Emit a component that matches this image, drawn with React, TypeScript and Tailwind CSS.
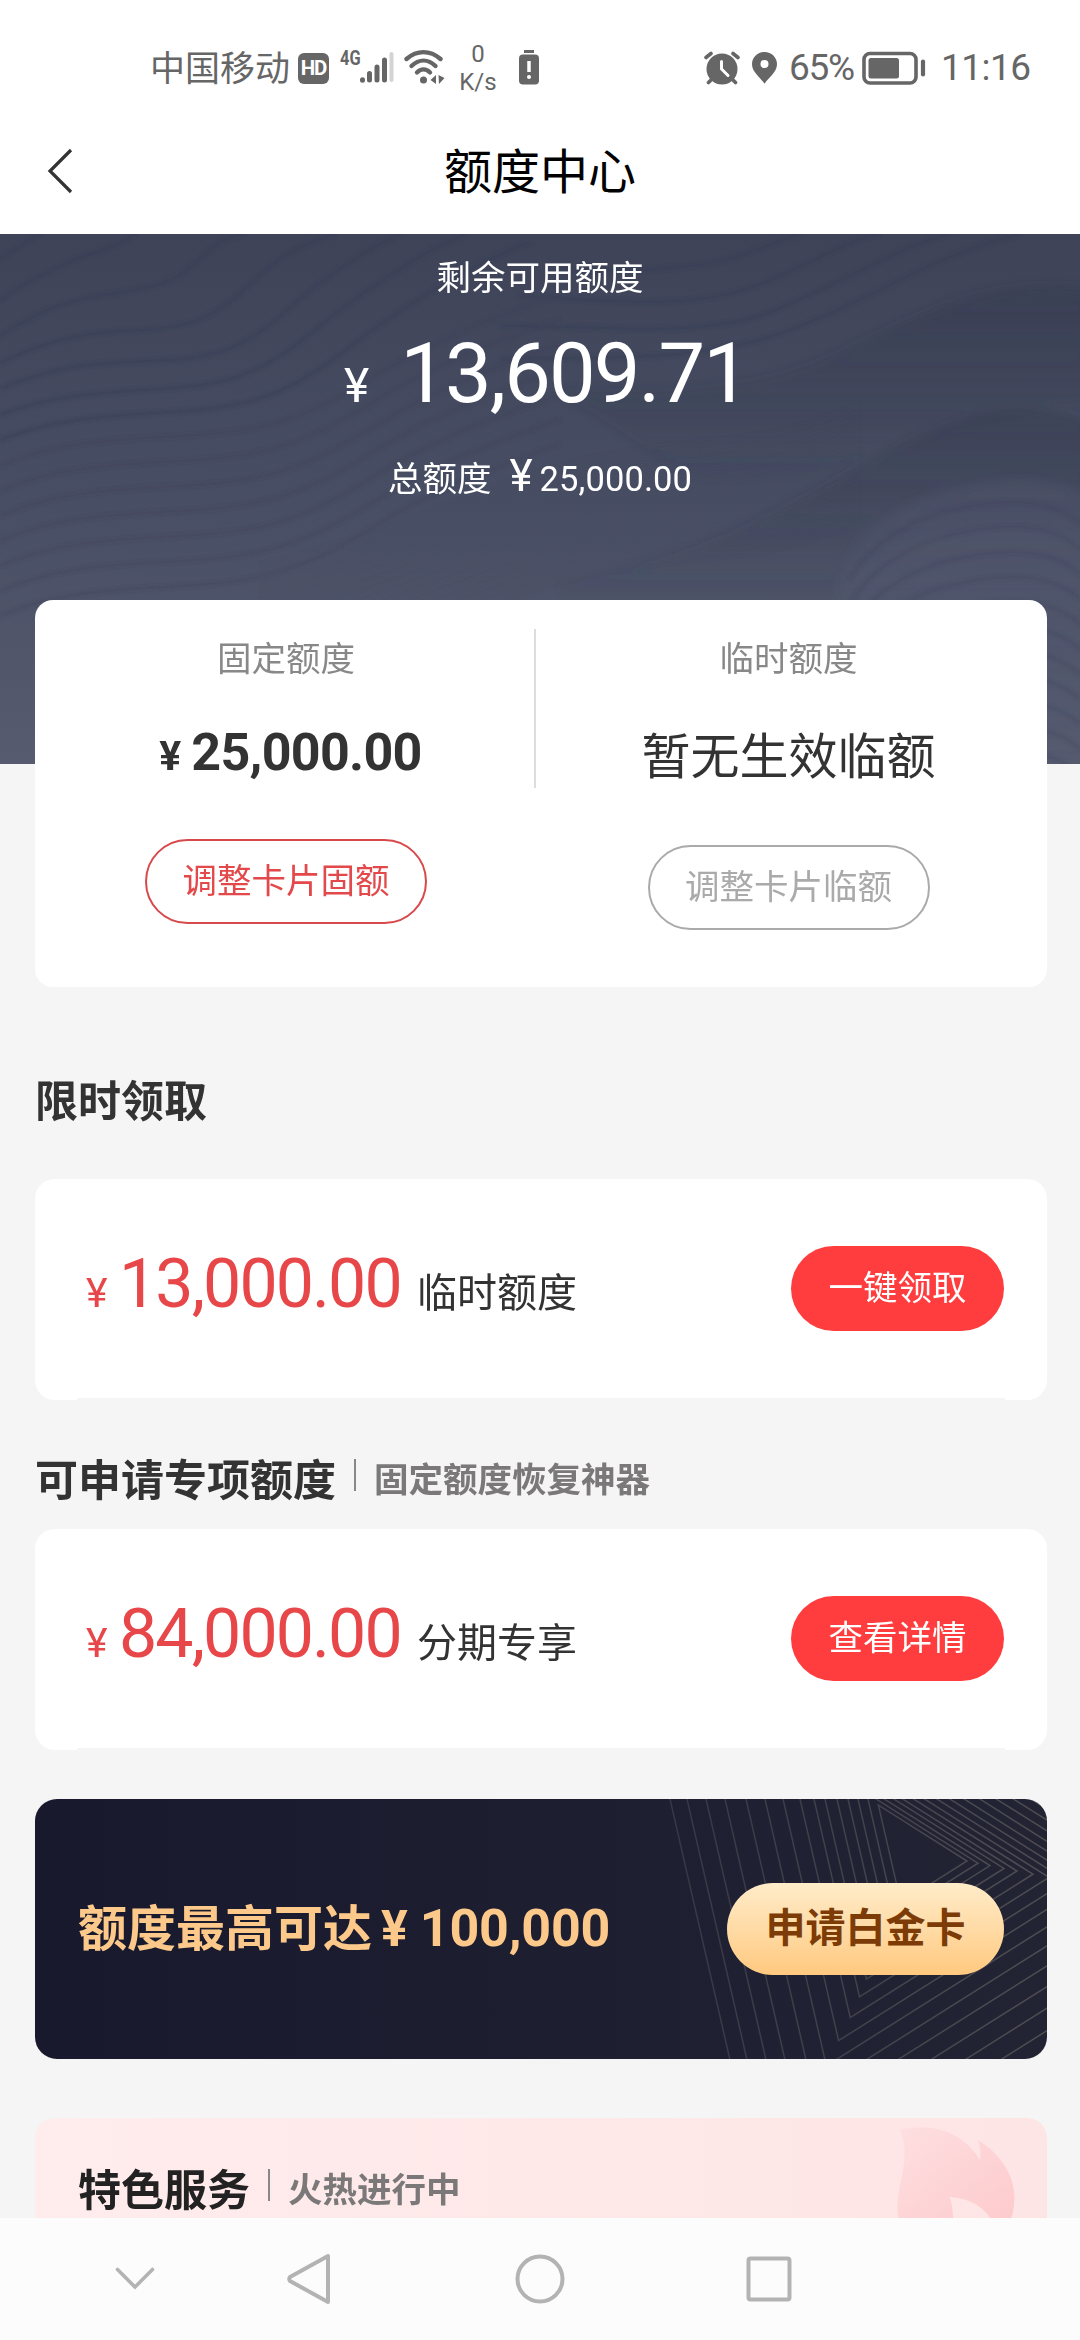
import type { ReactNode } from 'react';

interface OfferCardProps {
  amount: string;
  label: string;
  action: string;
}

interface SectionTitleProps {
  title: string;
  subtitle?: string;
}

// Contour lines on the left side of the banner
const LEFT_CONTOURS = [
  'M0 25 Q20 12 40 0',
  'M0 67 C20 50 40 42 65 30 S110 18 135 0',
  'M0 102 C40 75 70 66 110 60 S175 50 200 25 S228 4 245 0',
  'M0 129 C50 104 90 98 140 96 S215 84 250 50 S310 8 335 0',
  'M0 155 C50 133 90 129 150 127 S240 118 285 78 S370 14 400 0',
  'M0 181 C50 161 100 159 160 155 S255 145 310 100 S420 20 465 0',
  'M0 206 C50 186 100 182 170 178 S280 166 340 120 S470 30 530 8',
];

const RIGHT_CONTOURS = [
  'M560 34 C630 38 700 36 745 20 S785 4 800 0',
  'M520 62 C610 66 690 78 760 50 S850 4 880 0',
  'M500 92 C600 90 700 108 780 74 S900 12 950 0',
  'M500 125 C600 122 700 130 790 96 S930 22 1020 0',
];

const LOWER_OFFSETS = [0, 25, 50, 75, 100, 125, 150];
const FINE_OFFSETS = [0, 9, 18, 27, 36, 45, 54, 63, 72, 81, 90, 99, 108, 117];
const HILL_OFFSETS = [0, 25, 50, 75, 100, 125, 150, 175, 200, 225, 250];

function BannerPattern() {
  return (
    <svg className="absolute inset-0 h-full w-full" viewBox="0 0 1080 530" preserveAspectRatio="none" fill="none">
      <defs>
        <linearGradient id="ridge" x1="0" y1="0" x2="0" y2="1">
          <stop offset="0" stopColor="#32374c" stopOpacity="0.5" />
          <stop offset="1" stopColor="#32374c" stopOpacity="0" />
        </linearGradient>
        <linearGradient id="hill" x1="0" y1="0" x2="0" y2="1">
          <stop offset="0" stopColor="#5a6078" stopOpacity="0.28" />
          <stop offset="1" stopColor="#5a6078" stopOpacity="0" />
        </linearGradient>
        <filter id="soft">
          <feGaussianBlur stdDeviation="1.5" />
        </filter>
        <filter id="softer">
          <feGaussianBlur stdDeviation="5" />
        </filter>
      </defs>
      <g filter="url(#softer)">
        <path d="M560 156 C640 158 700 158 760 145 S850 112 905 88 S1010 46 1090 54 V170 C980 170 860 250 700 250 Z" fill="url(#ridge)" opacity="0.8" />
        <path d="M560 350 C640 335 720 305 780 275 S890 210 950 190 S1040 172 1090 188 V300 C950 270 850 320 840 366 H560 Z" fill="url(#ridge)" opacity="0.8" />
        <path d="M838 366 C838 320 870 285 925 264 S1050 238 1090 262 V530 H838 Z" fill="url(#hill)" />
      </g>
      <g filter="url(#soft)">
        <g stroke="#343a52" strokeOpacity="0.36" strokeWidth="4">
          {LEFT_CONTOURS.map((d) => <path key={d} d={d} />)}
          {RIGHT_CONTOURS.map((d) => <path key={d} d={d} />)}
        </g>
        <g stroke="#3a4058" strokeOpacity="0.24" strokeWidth="4">
          {LOWER_OFFSETS.map((y) => (
            <path key={y} transform={`translate(0 ${y})`} d="M0 232 C50 210 100 206 180 202 S300 188 370 145 S480 90 560 60" />
          ))}
          {HILL_OFFSETS.map((y) => (
            <path key={y} transform={`translate(0 ${y})`} d="M850 345 C870 310 910 285 955 275 S1050 262 1080 290" />
          ))}
        </g>
        <g stroke="#3e445c" strokeOpacity="0.14" strokeWidth="2.5">
          {FINE_OFFSETS.map((y) => (
            <path key={y} transform={`translate(0 ${y})`} d="M260 330 C400 300 520 230 640 215 S780 205 860 170" />
          ))}
        </g>
      </g>
    </svg>
  );
}

function StatusBar() {
  return (
    <div className="flex h-[108px] shrink-0 items-center bg-white pt-[28px] pl-[150px] text-[#666]">
      <span className="w-[140px] pt-[3px] text-[35px] leading-[40px]">中国移动</span>
      <span className="ml-[8px] flex h-[31px] w-[31px] items-center justify-center rounded-[6px] bg-[#666] text-[20.500px] leading-[31px] font-bold tracking-[-1.200px] text-white">HD</span>
      <span className="mb-[20px] ml-[11px] w-[20px] origin-left scale-x-[0.780] text-[21px] leading-[24px] font-bold">4G</span>
      <svg width="34" height="36" viewBox="20 0 34 36">
        <g strokeWidth="5" strokeLinecap="round" stroke="#666">
          <path d="M22.500 29.800V30.200M29.500 23.500V30M37 17V30M44.500 10V30" />
          <path d="M51.500 4V30" stroke="#d4d4d4" strokeWidth="4" />
        </g>
      </svg>
      <svg className="ml-[10px]" width="42" height="38" viewBox="0 0 42 38" fill="none" stroke="#666" strokeWidth="4.400" strokeLinecap="round">
        <path d="M2.500 10C13 .8 26 .8 36.500 10" />
        <path d="M7.500 17C15 9.800 24 9.800 31.500 17" />
        <path d="M13 23.500C17 19.500 22 19.500 26 23.500" />
        <circle cx="19.500" cy="31" r="3.500" fill="#666" stroke="none" />
        <path d="M32 26V35L26.500 31ZM34.500 26L40.500 29L35 35Z" fill="#666" stroke="none" />
      </svg>
      <span className="ml-[10px] flex w-[44px] flex-col items-center text-[24px] leading-[28px]">
        <span>0</span>
        <span>K/s</span>
      </span>
      <svg className="ml-[18px]" width="22" height="36" viewBox="0 0 22 36">
        <path d="M6 1.500H16" stroke="#666" strokeWidth="3" />
        <rect x="1" y="4.500" width="20" height="30" rx="4" fill="#666" />
        <path d="M11 11V22" stroke="#fff" strokeWidth="3.500" />
        <circle cx="11" cy="27" r="2" fill="#fff" />
      </svg>
      <svg className="ml-[164px]" width="36" height="34" viewBox="0 0 36 34" fill="none" stroke="#666" strokeWidth="3.600" strokeLinecap="round">
        <circle cx="18" cy="18" r="15.500" fill="#666" stroke="none" />
        <path d="M2 6.500L7 2.500M34 6.500L29 2.500M4.500 31.500L8 28M31.500 31.500L28 28" />
        <path d="M17.500 10.500V18L24 24.500" stroke="#fff" strokeWidth="3" />
      </svg>
      <svg className="ml-[11px]" width="27" height="34" viewBox="0 0 27 34">
        <path fillRule="evenodd" fill="#666" d="M13.500 1C6.500 1 1 6.500 1 13.200C1 21 9 26 13.500 32.800C18 26 26 21 26 13.200C26 6.500 20.500 1 13.500 1ZM13.500 9A4 4 0 1 1 13.500 17A4 4 0 0 1 13.500 9Z" />
      </svg>
      <span className="ml-[11px] w-[68px] text-[37px] leading-[40px] tracking-[-1.300px] whitespace-nowrap">65%</span>
      <svg className="ml-[5px]" width="66" height="34" viewBox="0 0 66 34" fill="none">
        <rect x="2" y="2.500" width="52" height="29.500" rx="6" stroke="#666" strokeWidth="3.600" />
        <rect x="6.500" y="7" width="30.500" height="20.500" rx="2.500" fill="#666" />
        <path d="M61 10.500V23.500" stroke="#666" strokeWidth="4.200" strokeLinecap="round" />
      </svg>
      <span className="ml-[13px] text-[37px] leading-[40px] tracking-[-0.500px] whitespace-nowrap">11:16</span>
    </div>
  );
}

function SectionTitle({ title, subtitle }: SectionTitleProps) {
  return (
    <div className="flex h-[48px] items-center">
      <h2 className="text-[43px] leading-[48px] font-bold">{title}</h2>
      {subtitle && (
        <>
          <span className="mb-[12px] ml-[18px] h-[32px] w-[2px] bg-[#888]" />
          <span className="mb-[2px] ml-[18px] text-[34.500px] leading-[48px] font-bold text-[#7a7878]">{subtitle}</span>
        </>
      )}
    </div>
  );
}

function PillButton({ children }: { children: ReactNode }) {
  return (
    <button className="ml-auto h-[85px] w-[213px] rounded-full bg-[#ff3d3e] text-[34.500px] text-white">
      {children}
    </button>
  );
}

function OfferCard({ amount, label, action }: OfferCardProps) {
  return (
    <div className="flex h-[221px] flex-col overflow-hidden rounded-[20px] bg-white">
      <div className="flex h-[219px] items-center pr-[43px] pl-[51px]">
        <div className="flex items-baseline leading-[70px]">
          <span className="w-[33px] text-[41px] text-[#e8474a]">¥</span>
          <span className="w-[280px] text-[68px] tracking-[-1.900px] whitespace-nowrap text-[#e8474a]">{amount}</span>
          <span className="ml-[18px] text-[40px] text-[#333]">{label}</span>
        </div>
        <PillButton>{action}</PillButton>
      </div>
      <div className="mx-[42px] h-[2px] bg-[#f5f5f5]" />
    </div>
  );
}

// Nested triangles behind the platinum card banner: [left edge x at the top, right corner x]
const TRIANGLES = [
  [237, 327], [228, 338], [218, 350], [208, 364], [197, 377],
  [185, 393], [174, 409], [160, 427], [143, 446], [125, 467],
  [106, 490], [85, 514], [66, 539], [47, 565], [30, 592],
];

function trianglePath(left: number, right: number) {
  const rightY = 62 + (right - 327) * 0.2;
  const rise = 0.63 * (right - left);
  const topY = (rightY - rise) / 0.855;
  const bottomY = (rightY + rise) / 1.145;
  return `M${left + 0.23 * topY} ${topY} L${right} ${rightY} L${left + 0.23 * bottomY} ${bottomY} Z`;
}

function PlatinumPattern() {
  return (
    <svg className="absolute top-0 right-0" width="407" height="260" viewBox="0 0 407 260" fill="none">
      <defs>
        <linearGradient id="lines" gradientUnits="userSpaceOnUse" x1="0" y1="0" x2="407" y2="0">
          <stop offset="0" stopColor="#6d6a70" stopOpacity="0.3" />
          <stop offset="1" stopColor="#7d7872" stopOpacity="0.5" />
        </linearGradient>
      </defs>
      <g stroke="url(#lines)" strokeWidth="1.500">
        {TRIANGLES.map(([left, right]) => (
          <path key={left} d={trianglePath(left, right)} />
        ))}
      </g>
    </svg>
  );
}

function NavBar() {
  return (
    <div className="flex h-[122px] shrink-0 items-center bg-[#fcfcfc] pl-[115px]">
      <svg width="40" height="24" viewBox="0 0 40 24" fill="none" stroke="#b3b3b3" strokeWidth="3.600" strokeLinecap="round">
        <path d="M2.500 2.500L20 20L37.500 2.500" />
      </svg>
      <svg className="ml-[131px]" width="46" height="52" viewBox="0 0 46 52" fill="none" stroke="#b3b3b3" strokeWidth="4" strokeLinejoin="round">
        <path d="M42 3V49L4 28Q2.500 26 4 24Z" />
      </svg>
      <svg className="ml-[183px]" width="50" height="50" viewBox="0 0 50 50" fill="none" stroke="#b3b3b3" strokeWidth="4">
        <circle cx="25" cy="25" r="22.500" />
      </svg>
      <svg className="ml-[181px]" width="46" height="46" viewBox="0 0 46 46" fill="none" stroke="#b3b3b3" strokeWidth="4">
        <rect x="2.500" y="2.500" width="41" height="41" rx="2" />
      </svg>
    </div>
  );
}

export default function App() {
  return (
    <div className="flex h-[2340px] w-[1080px] flex-col overflow-hidden bg-[#f5f5f5] font-[Roboto,'Noto_Sans_CJK_SC',sans-serif]">
      <StatusBar />

      {/* Title bar */}
      <header className="relative flex h-[126px] shrink-0 items-center justify-center bg-white">
        <svg className="absolute top-[40px] left-[46px]" width="28" height="46" viewBox="0 0 28 46" fill="none" stroke="#333" strokeWidth="3.200">
          <path d="M25 2L4 23L25 44" />
        </svg>
        <h1 className="pt-[4px] text-[48px] leading-[60px] text-black">额度中心</h1>
      </header>

      {/* Available credit */}
      <section className="relative h-[530px] shrink-0 bg-linear-to-b from-[#3e4358] via-[#484e63] to-[#565b70] text-white">
        <BannerPattern />
        <div className="relative flex flex-col items-center pt-[24px]">
          <p className="text-[34.500px] leading-[40px]">剩余可用额度</p>
          <p className="mt-[26px] flex items-baseline pl-[12px] leading-[100px]">
            <span className="text-[48px]">¥</span>
            <span className="ml-[31px] text-[83px] tracking-[-1.900px]">13,609.71</span>
          </p>
          <p className="mt-[20px] flex items-baseline leading-[40px]">
            <span className="text-[34.500px]">总额度</span>
            <span className="ml-[18px] text-[44px]">¥</span>
            <span className="ml-[7px] text-[34.500px] tracking-[0.100px]">25,000.00</span>
          </p>
        </div>
      </section>

      <main className="relative -mt-[164px] flex flex-1 flex-col overflow-hidden pr-[33px] pl-[35px] text-[#333]">
        {/* Fixed / temporary limits */}
        <section className="flex h-[387px] shrink-0 rounded-[18px] bg-white">
          <div className="flex w-[502px] flex-col items-center pt-[35px]">
            <p className="text-[34.500px] leading-[48px] text-[#888]">固定额度</p>
            <p className="mt-[40px] flex h-[60px] items-baseline pl-[9px] leading-[60px] font-bold">
              <span className="text-[41px]">¥</span>
              <span className="ml-[10px] text-[52px] tracking-[-0.700px]">25,000.00</span>
            </p>
            <button className="mt-[56px] h-[85px] w-[282px] rounded-full border-2 border-[#d8494c] text-[34.500px] text-[#e3484a]">
              调整卡片固额
            </button>
          </div>
          <div className="mt-[29px] -ml-[3px] h-[159px] w-[2px] bg-[#ddd]" />
          <div className="flex w-[505px] flex-col items-center pt-[35px]">
            <p className="text-[34.500px] leading-[48px] text-[#888]">临时额度</p>
            <p className="mt-[42px] text-[49px] leading-[66px]">暂无生效临额</p>
            <button className="mt-[54px] h-[85px] w-[282px] rounded-full border-2 border-[#aaa] text-[34.500px] text-[#aaa]">
              调整卡片临额
            </button>
          </div>
        </section>

        <div className="mt-[91px]">
          <SectionTitle title="限时领取" />
        </div>
        <div className="mt-[53px]">
          <OfferCard amount="13,000.00" label="临时额度" action="一键领取" />
        </div>

        <div className="mt-[57px]">
          <SectionTitle title="可申请专项额度" subtitle="固定额度恢复神器" />
        </div>
        <div className="mt-[24px]">
          <OfferCard amount="84,000.00" label="分期专享" action="查看详情" />
        </div>

        {/* Platinum card banner */}
        <section className="relative mt-[49px] flex h-[260px] shrink-0 items-center overflow-hidden rounded-[22px] bg-linear-to-r from-[#18192d] to-[#222333] pr-[43px] pl-[43px]">
          <PlatinumPattern />
          <p className="relative flex items-baseline leading-[60px] font-bold text-[#fdc98a]">
            <span className="text-[49px]">额度最高可达</span>
            <span className="ml-[9px] text-[50px]">¥</span>
            <span className="ml-[12px] text-[52px] tracking-[-0.200px]">100,000</span>
          </p>
          <button className="relative ml-auto h-[92px] w-[277px] rounded-full bg-linear-to-b from-[#ffecc9] to-[#ffc97f] text-[40px] font-bold text-[#7d3b07]">
            申请白金卡
          </button>
        </section>

        {/* Featured services */}
        <section className="relative mt-[59px] h-[200px] shrink-0 overflow-hidden rounded-t-[20px] bg-linear-to-r from-[#ffeced] to-[#fee5e5] pt-[49px] pl-[43px] text-[#222]">
          <svg className="absolute top-[8px] right-[30px]" width="120" height="140" viewBox="0 0 120 140">
            <defs>
              <linearGradient id="flame" x1="0" y1="0" x2="0.8" y2="1">
                <stop offset="0" stopColor="#fedfe1" />
                <stop offset="1" stopColor="#fdc9cb" />
              </linearGradient>
            </defs>
            <path
              d="M3 4C42 -6 70 12 83 34C84 26 83 20 81 14C107 30 120 55 117 78C116 96 104 118 84 128C92 112 98 100 92 90C82 77 68 72 52 71C58 80 54 100 62 128C20 128 4 110 1 90C-3 62 16 34 3 4Z"
              fill="url(#flame)"
            />
          </svg>
          <div className="relative">
            <SectionTitle title="特色服务" subtitle="火热进行中" />
          </div>
        </section>
      </main>

      <NavBar />
    </div>
  );
}
